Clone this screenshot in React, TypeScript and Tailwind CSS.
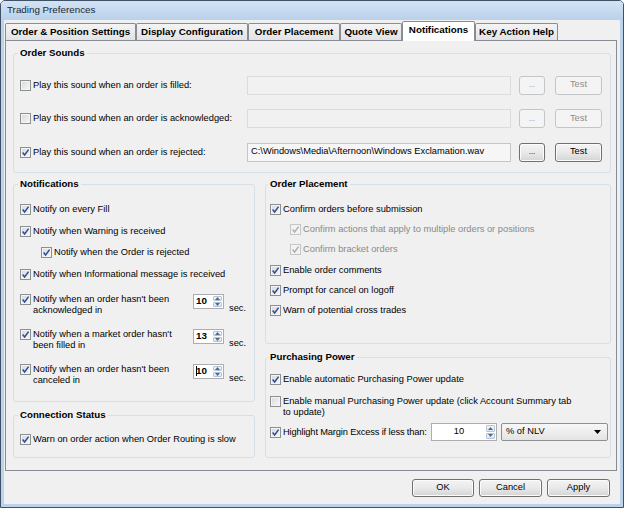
import clsx from "clsx";
import type { ReactNode } from "react";

const FONT = "font-['Liberation_Sans',Arial,sans-serif]";

function Check({ checked, disabled }: { checked?: boolean; disabled?: boolean }) {
  return (
    <span
      className={clsx(
        "flex-none w-[11px] h-[11px] border flex items-center justify-center",
        disabled
          ? "border-[#c6c6c6] bg-[#f3f3f3]"
          : "border-[#8e8f8f] bg-linear-to-br from-[#d6d8dc] to-[#f8f8f8] shadow-[inset_0_0_0_1px_#f4f4f4]"
      )}
    >
      {checked && (
        <svg width="9" height="9" viewBox="0 0 9 9">
          <path
            d="M1.6 4.6 L3.6 7 L7.6 1.6"
            fill="none"
            stroke={disabled ? "#aab0b8" : "#2c4d96"}
            strokeWidth="1.5"
          />
        </svg>
      )}
    </span>
  );
}

function Option({
  checked,
  disabled,
  children,
  className,
}: {
  checked?: boolean;
  disabled?: boolean;
  children: ReactNode;
  className?: string;
}) {
  return (
    <div className={clsx("flex items-center h-[13px] gap-[2px]", className)}>
      <Check checked={checked} disabled={disabled} />
      <span className={clsx("leading-[13px] whitespace-nowrap", disabled && "text-[#8a8a8a]")}>{children}</span>
    </div>
  );
}

function Btn({ children, disabled, className }: { children: ReactNode; disabled?: boolean; className?: string }) {
  return (
    <button
      type="button"
      className={clsx(
        "flex items-center justify-center border rounded-[3px] leading-none",
        disabled
          ? "border-[#c3c6c9] bg-[#f4f4f4] text-[#8d8d8d]"
          : "border-[#707070] bg-linear-to-b from-[#f4f4f4] via-[#e9e9e9] to-[#d4d4d4] shadow-[inset_0_0_0_1px_#fbfbfb]",
        className
      )}
    >
      {children}
    </button>
  );
}

function Arrows() {
  return (
    <div className="flex flex-col w-[10px] py-px pr-px gap-px">
      <span className="flex-1 flex items-center justify-center bg-linear-to-b from-[#f3f6fa] to-[#dce5f0] border border-[#b7c4d5] rounded-[1px]">
        <svg width="5" height="3" viewBox="0 0 5 3">
          <path d="M0 3 L2.5 0 L5 3Z" fill="#4d6b92" />
        </svg>
      </span>
      <span className="flex-1 flex items-center justify-center bg-linear-to-b from-[#f3f6fa] to-[#dce5f0] border border-[#b7c4d5] rounded-[1px]">
        <svg width="5" height="3" viewBox="0 0 5 3">
          <path d="M0 0 L2.5 3 L5 0Z" fill="#4d6b92" />
        </svg>
      </span>
    </div>
  );
}

function SecSpin({ value, caret }: { value: string; caret?: boolean }) {
  return (
    <div className="flex items-start">
      <div className="flex w-[31px] h-[15px] border border-[#abadb3] bg-white">
        <span className="flex-1 flex items-center pl-[2px] font-bold text-[9.8px] leading-none">
          {caret && <span className="w-px h-[10px] bg-black -mr-px" />}
          {value}
        </span>
        <Arrows />
      </div>
      <span className="ml-[5px] mt-[9px] leading-[11px]">sec.</span>
    </div>
  );
}

function TimedRow({ lines, value, caret }: { lines: [string, string]; value: string; caret?: boolean }) {
  return (
    <div className="flex items-start h-[22px]">
      <div className="flex items-start gap-[2px] w-[173px]">
        <Check checked />
        <span className="leading-[11px]">
          {lines[0]}
          <br />
          {lines[1]}
        </span>
      </div>
      <SecSpin value={value} caret={caret} />
    </div>
  );
}

function Group({ title, className, children }: { title: string; className?: string; children: ReactNode }) {
  return (
    <fieldset className={clsx("border border-[#d5dfe5] rounded-[3px]", className)}>
      <legend className="-ml-[2px] px-[2px] font-bold text-[9.7px] leading-[12px]">{title}</legend>
      {children}
    </fieldset>
  );
}

function SoundRow({ label, path, checked }: { label: string; path?: string; checked?: boolean }) {
  return (
    <div className="flex items-center h-[20px]">
      <div className="w-[227px] flex items-center gap-[2px]">
        <Check checked={checked} />
        <span className="leading-[11px]">{label}</span>
      </div>
      <div
        className={clsx(
          "w-[264px] h-[19px] border flex items-center pl-[3px]",
          checked ? "border-[#c4c6c9] bg-[#f6f6f6]" : "border-[#dadcde] bg-[#f1f1f1]"
        )}
      >
        {path}
      </div>
      <Btn disabled={!checked} className="ml-[8px] w-[26px] h-[19px] text-[8px]">
        ...
      </Btn>
      <Btn disabled={!checked} className="ml-[10px] w-[47px] h-[19px]">
        Test
      </Btn>
    </div>
  );
}

const tabs = [
  { label: "Order & Position Settings", w: "w-[131px]" },
  { label: "Display Configuration", w: "w-[112px]" },
  { label: "Order Placement", w: "w-[92px]" },
  { label: "Quote View", w: "w-[62px]" },
  { label: "Notifications", w: "w-[73px]", active: true },
  { label: "Key Action Help", w: "w-[83px]" },
];

export default function App() {
  return (
    <div
      className={clsx(
        "w-[624px] h-[508px] flex flex-col bg-[#bcd3ea] border border-[#3e5166] rounded-t-[5px] overflow-hidden text-[9.3px] text-black",
        FONT
      )}
    >
      <div className="h-[19px] flex-none flex items-center pl-[6px] text-[9.8px] text-[#1c2736] bg-linear-to-b from-[#d3e3f4] to-[#b9d1ea]">
        Trading Preferences
      </div>

      <div className="flex-1 mx-[3px] mb-[3px] bg-[#f0f0f0] flex flex-col">
        {/* tab strip */}
        <div className="h-[20px] flex-none flex items-end pl-px">
          {tabs.map((t) =>
            t.active ? (
              <div
                key={t.label}
                className={clsx(
                  "relative z-10 h-[20px] -mb-px pb-[3px] flex items-center justify-center border border-b-0 border-[#898c95] rounded-t-[2px] bg-white font-bold text-[9.8px]",
                  t.w
                )}
              >
                {t.label}
              </div>
            ) : (
              <div
                key={t.label}
                className={clsx(
                  "h-[17px] flex items-center justify-center border border-b-0 border-[#898c95] rounded-t-[2px] bg-linear-to-b from-[#f4f4f4] to-[#e3e3e3] font-bold text-[9.8px]",
                  t.w
                )}
              >
                {t.label}
              </div>
            )
          )}
        </div>

        {/* tab page */}
        <div className="ml-px w-[612px] h-[431px] flex-none border border-[#898c95] bg-[#f0f0f0] flex flex-col pt-[6px] pl-[7px] pr-[5px]">
          <Group title="Order Sounds" className="h-[126px] pl-[6px]">
            <div className="mt-[16px] flex flex-col gap-[13.5px]">
              <SoundRow label="Play this sound when an order is filled:" />
              <SoundRow label="Play this sound when an order is acknowledged:" />
              <SoundRow
                label="Play this sound when an order is rejected:"
                checked
                path={"C:\\Windows\\Media\\Afternoon\\Windows Exclamation.wav"}
              />
            </div>
          </Group>

          <div className="mt-[5px] flex gap-[10px]">
            <div className="w-[242px] flex flex-col gap-[7px]">
              <Group title="Notifications" className="h-[224px] pl-[6px]">
                <div className="mt-[13px] flex flex-col gap-[8.5px]">
                  <Option checked>Notify on every Fill</Option>
                  <Option checked>Notify when Warning is received</Option>
                  <Option checked className="ml-[21px]">
                    Notify when the Order is rejected
                  </Option>
                  <Option checked>Notify when Informational message is received</Option>
                </div>
                <div className="mt-[13px] flex flex-col gap-[13px]">
                  <TimedRow lines={["Notify when an order hasn't been", "acknowledged in"]} value="10" />
                  <TimedRow lines={["Notify when a market order hasn't", "been filled in"]} value="13" />
                  <TimedRow lines={["Notify when an order hasn't been", "canceled in"]} value="10" caret />
                </div>
              </Group>

              <Group title="Connection Status" className="h-[49px] pl-[6px]">
                <Option checked className="mt-[11.5px]">
                  Warn on order action when Order Routing is slow
                </Option>
              </Group>
            </div>

            <div className="flex-1 flex flex-col gap-[7px]">
              <Group title="Order Placement" className="h-[166px] pl-[4px]">
                <div className="mt-[12.5px] flex flex-col gap-[7.4px]">
                  <Option checked>Confirm orders before submission</Option>
                  <Option checked disabled className="ml-[20px]">
                    Confirm actions that apply to multiple orders or positions
                  </Option>
                  <Option checked disabled className="ml-[20px]">
                    Confirm bracket orders
                  </Option>
                  <Option checked>Enable order comments</Option>
                  <Option checked>Prompt for cancel on logoff</Option>
                  <Option checked>Warn of potential cross trades</Option>
                </div>
              </Group>

              <Group title="Purchasing Power" className="h-[107px] pl-[4px]">
                <Option checked className="mt-[9.5px]">
                  Enable automatic Purchasing Power update
                </Option>
                <div className="mt-[10.5px] flex items-start gap-[2px]">
                  <Check />
                  <span className="leading-[10.5px]">
                    Enable manual Purchasing Power update (click Account Summary tab
                    <br />
                    to update)
                  </span>
                </div>
                <div className="mt-[6px] flex items-center h-[18px]">
                  <div className="w-[161px] flex items-center gap-[2px]">
                    <Check checked />
                    <span className="leading-[11px] whitespace-nowrap tracking-[-0.15px]">
                      Highlight Margin Excess if less than:
                    </span>
                  </div>
                  <div className="flex w-[66px] h-[18px] border border-[#abadb3] bg-white">
                    <span className="flex-1 flex items-center justify-center">10</span>
                    <Arrows />
                  </div>
                  <div className="ml-[4px] w-[107px] h-[18px] flex items-center border border-[#8e8f8f] rounded-[2px] bg-linear-to-b from-[#f7f7f7] to-[#e4e4e4] pl-[4px] pr-[6px]">
                    <span className="flex-1">% of NLV</span>
                    <svg width="7" height="4" viewBox="0 0 7 4">
                      <path d="M0 0 L7 0 L3.5 4Z" fill="#000" />
                    </svg>
                  </div>
                </div>
              </Group>
            </div>
          </div>
        </div>

        {/* dialog buttons */}
        <div className="mt-[8px] flex justify-end gap-[5px] pr-[10px]">
          <Btn className="w-[62px] h-[18px]">OK</Btn>
          <Btn className="w-[63px] h-[18px]">Cancel</Btn>
          <Btn className="w-[63px] h-[18px]">Apply</Btn>
        </div>
      </div>
    </div>
  );
}
